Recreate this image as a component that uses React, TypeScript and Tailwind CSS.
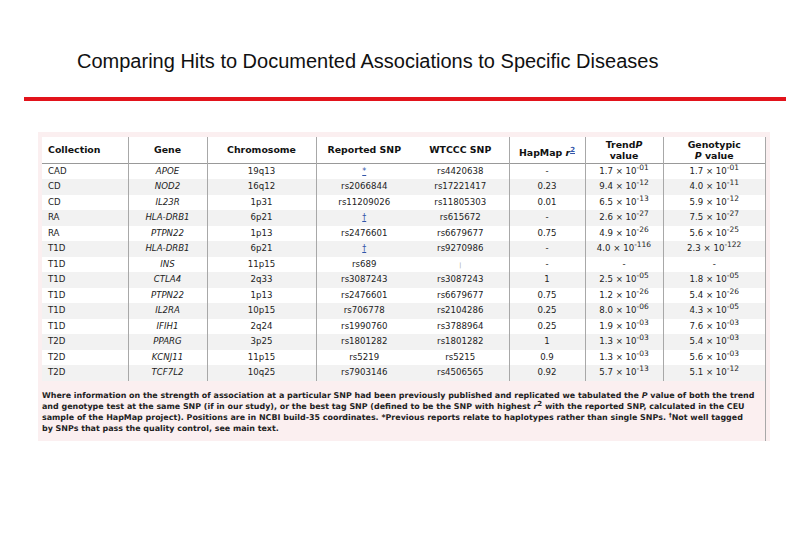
import React from "react";

type Row = {
  col: string;
  gene: string;
  chr: string;
  rep: string;
  wtccc: string;
  hap: string;
  trend: [string, string] | null;
  geno: [string, string] | null;
};

const rows: Row[] = [
  { col: "CAD", gene: "APOE", chr: "19q13", rep: "*", wtccc: "rs4420638", hap: "-", trend: ["1.7", "-01"], geno: ["1.7", "-01"] },
  { col: "CD", gene: "NOD2", chr: "16q12", rep: "rs2066844", wtccc: "rs17221417", hap: "0.23", trend: ["9.4", "-12"], geno: ["4.0", "-11"] },
  { col: "CD", gene: "IL23R", chr: "1p31", rep: "rs11209026", wtccc: "rs11805303", hap: "0.01", trend: ["6.5", "-13"], geno: ["5.9", "-12"] },
  { col: "RA", gene: "HLA-DRB1", chr: "6p21", rep: "†", wtccc: "rs615672", hap: "-", trend: ["2.6", "-27"], geno: ["7.5", "-27"] },
  { col: "RA", gene: "PTPN22", chr: "1p13", rep: "rs2476601", wtccc: "rs6679677", hap: "0.75", trend: ["4.9", "-26"], geno: ["5.6", "-25"] },
  { col: "T1D", gene: "HLA-DRB1", chr: "6p21", rep: "†", wtccc: "rs9270986", hap: "-", trend: ["4.0", "-116"], geno: ["2.3", "-122"] },
  { col: "T1D", gene: "INS", chr: "11p15", rep: "rs689", wtccc: "‡", hap: "-", trend: null, geno: null },
  { col: "T1D", gene: "CTLA4", chr: "2q33", rep: "rs3087243", wtccc: "rs3087243", hap: "1", trend: ["2.5", "-05"], geno: ["1.8", "-05"] },
  { col: "T1D", gene: "PTPN22", chr: "1p13", rep: "rs2476601", wtccc: "rs6679677", hap: "0.75", trend: ["1.2", "-26"], geno: ["5.4", "-26"] },
  { col: "T1D", gene: "IL2RA", chr: "10p15", rep: "rs706778", wtccc: "rs2104286", hap: "0.25", trend: ["8.0", "-06"], geno: ["4.3", "-05"] },
  { col: "T1D", gene: "IFIH1", chr: "2q24", rep: "rs1990760", wtccc: "rs3788964", hap: "0.25", trend: ["1.9", "-03"], geno: ["7.6", "-03"] },
  { col: "T2D", gene: "PPARG", chr: "3p25", rep: "rs1801282", wtccc: "rs1801282", hap: "1", trend: ["1.3", "-03"], geno: ["5.4", "-03"] },
  { col: "T2D", gene: "KCNJ11", chr: "11p15", rep: "rs5219", wtccc: "rs5215", hap: "0.9", trend: ["1.3", "-03"], geno: ["5.6", "-03"] },
  { col: "T2D", gene: "TCF7L2", chr: "10q25", rep: "rs7903146", wtccc: "rs4506565", hap: "0.92", trend: ["5.7", "-13"], geno: ["5.1", "-12"] },
];

function PVal({ v }: { v: [string, string] | null }) {
  if (!v) return <span>-</span>;
  return (
    <span>
      {v[0]} × 10<sup className="text-[7.5px] -top-[4px]">{v[1]}</sup>
    </span>
  );
}

function SnpCell({ s }: { s: string }) {
  if (s === "*" || s === "†")
    return <span className="text-[#3355aa] underline text-[8px]">{s}</span>;
  if (s === "‡") return <span className="text-[#999] text-[6px]">|</span>;
  return <span>{s}</span>;
}

export default function App() {
  const line = "border-l border-[#a8a8a8]";
  return (
    <div className="w-[810px] h-[540px] bg-white overflow-hidden">
      <div className="pt-[49px] pl-[77px] text-[20px] leading-[24px] text-[#111] font-['Liberation_Sans',Arial,sans-serif]">
        Comparing Hits to Documented Associations to Specific Diseases
      </div>
      <div className="mt-[24px] mx-[24px] h-[4px] bg-[#e2131b]" />

      <div className="mt-[31px] ml-[38px] w-[732px] bg-[#fbeff0] pt-[5px] px-[4px] font-['DejaVu_Sans',Verdana,sans-serif] text-[#222]">
        <div className="border-r border-[#a8a8a8]">
          <table className="table-fixed border-collapse bg-white w-[723px]">
            <colgroup>
              <col className="w-[86px]" />
              <col className="w-[79px]" />
              <col className="w-[109px]" />
              <col className="w-[96px]" />
              <col className="w-[97px]" />
              <col className="w-[76px]" />
              <col className="w-[78px]" />
              <col className="w-[102px]" />
            </colgroup>
            <thead>
              <tr className="h-[26px] text-[9.4px] font-bold text-[#111] leading-[11px] border-b border-[#999]">
                <th className="text-left pl-[6px] font-bold">Collection</th>
                <th className={`${line} font-bold`}>Gene</th>
                <th className={`${line} font-bold`}>Chromosome</th>
                <th className={`${line} font-bold`}>Reported SNP</th>
                <th className="font-bold">WTCCC SNP</th>
                <th className={`${line} font-bold`}>
                  <span className="relative top-[3px]">
                    HapMap <i>r</i>
                    <sup className="text-[#3355aa] underline text-[7px] -top-[4px]">2</sup>
                  </span>
                </th>
                <th className={`${line} font-bold`}>
                  Trend<i>P</i>
                  <br />
                  value
                </th>
                <th className={`${line} font-bold`}>
                  Genotypic
                  <br />
                  <i>P</i> value
                </th>
              </tr>
            </thead>
            <tbody className="text-[8.6px] leading-[15.5px]">
              {rows.map((r, i) => (
                <tr key={i} className="h-[15.5px] even:bg-[#f2f2f2]">
                  <td className="pl-[6px] whitespace-nowrap">{r.col}</td>
                  <td className={`${line} text-center italic`}>{r.gene}</td>
                  <td className={`${line} text-center`}>{r.chr}</td>
                  <td className={`${line} text-center`}>
                    <SnpCell s={r.rep} />
                  </td>
                  <td className="text-center">
                    <SnpCell s={r.wtccc} />
                  </td>
                  <td className={`${line} text-center`}>{r.hap}</td>
                  <td className={`${line} text-center whitespace-nowrap`}>
                    <PVal v={r.trend} />
                  </td>
                  <td className={`${line} text-center whitespace-nowrap`}>
                    <PVal v={r.geno} />
                  </td>
                </tr>
              ))}
            </tbody>
          </table>
          <div className="pt-[9px] pb-[6px] text-[7.95px] leading-[11.3px] font-bold whitespace-nowrap text-[#222]">
            Where information on the strength of association at a particular SNP had been previously published and replicated we tabulated the <i>P</i> value of both the trend
            <br />
            and genotype test at the same SNP (if in our study), or the best tag SNP (defined to be the SNP with highest <i>r</i>
            <sup className="text-[7px] -top-[3px]">2</sup> with the reported SNP, calculated in the CEU
            <br />
            sample of the HapMap project). Positions are in NCBI build-35 coordinates. *Previous reports relate to haplotypes rather than single SNPs. <sup className="text-[6px] -top-[3px]">†</sup>Not well tagged
            <br />
            by SNPs that pass the quality control, see main text.
          </div>
        </div>
      </div>
    </div>
  );
}
